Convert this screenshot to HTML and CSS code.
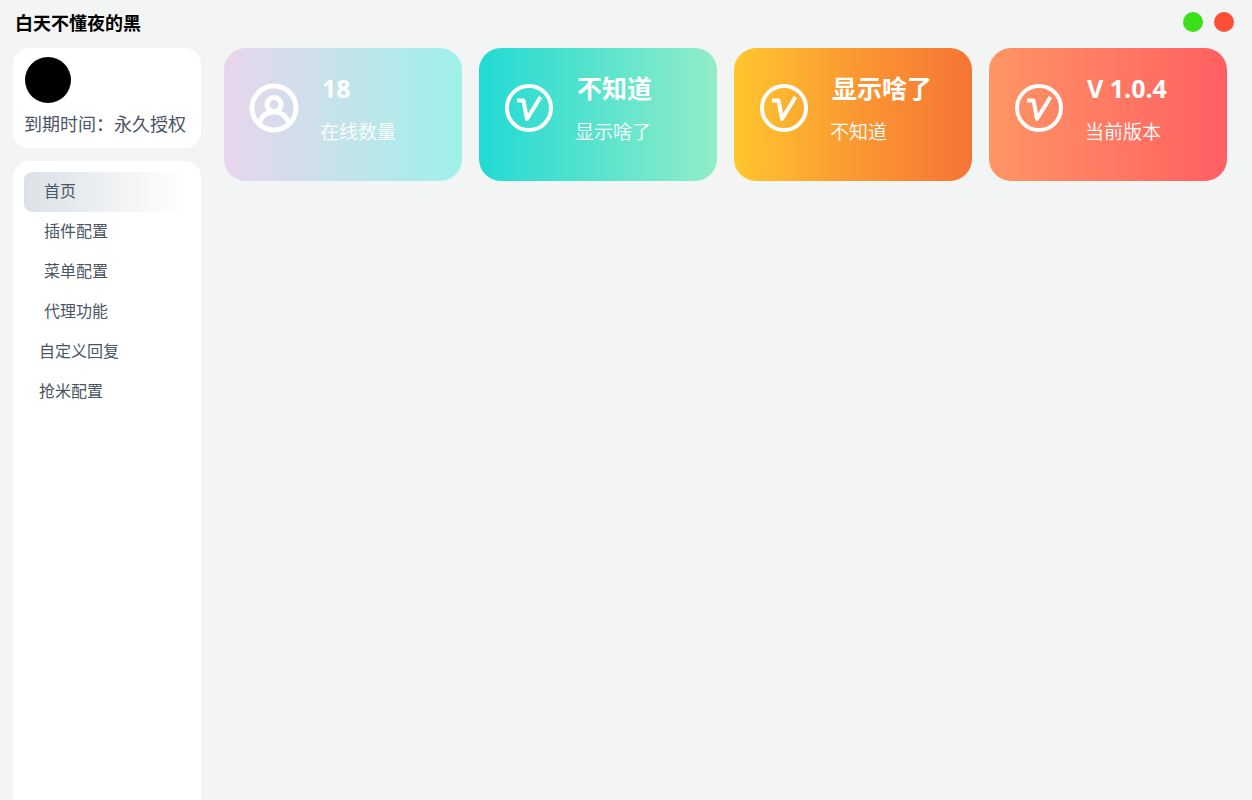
FILE: index.html
```html
<!DOCTYPE html>
<html lang="zh-CN">
<head>
    <meta charset="UTF-8">
    <meta name="viewport" content="width=device-width, initial-scale=1.0">
    <title>白天不懂夜的黑</title>
    <link rel="stylesheet" href="styles.css">
</head>
<body>
    <header class="title-bar">
        <h1 class="app-title">白天不懂夜的黑</h1>
        <div class="window-controls">
            <button type="button" class="window-btn btn-minimize" aria-label="最小化"></button>
            <button type="button" class="window-btn btn-close" aria-label="关闭"></button>
        </div>
    </header>

    <div class="layout">
        <aside class="sidebar">
            <div class="user-card">
                <div class="avatar"></div>
                <p class="expire">到期时间：永久授权</p>
            </div>
            <nav class="menu">
                <a href="#home" class="menu-item active">首页</a>
                <a href="#plugin" class="menu-item">插件配置</a>
                <a href="#menu" class="menu-item">菜单配置</a>
                <a href="#agent" class="menu-item">代理功能</a>
                <a href="#reply" class="menu-item menu-item-wide">自定义回复</a>
                <a href="#grab" class="menu-item menu-item-wide">抢米配置</a>
            </nav>
        </aside>

        <main class="content">
            <section class="card card-online">
                <svg class="card-icon icon-user" viewBox="0 0 48 48">
                    <circle cx="24" cy="24" r="22"></circle>
                    <circle cx="24" cy="20.5" r="7"></circle>
                    <path d="M10 38C12 31.5 17 28 24 28S36 31.5 38 38"></path>
                </svg>
                <div class="card-text">
                    <h2 class="card-value">18</h2>
                    <p class="card-label">在线数量</p>
                </div>
            </section>
            <section class="card card-unknown">
                <svg class="card-icon" viewBox="0 0 48 48">
                    <circle cx="24" cy="24" r="22"></circle>
                    <path d="M12 16.5H18.5L22 35L35.5 13"></path>
                </svg>
                <div class="card-text">
                    <h2 class="card-value">不知道</h2>
                    <p class="card-label">显示啥了</p>
                </div>
            </section>
            <section class="card card-display">
                <svg class="card-icon" viewBox="0 0 48 48">
                    <circle cx="24" cy="24" r="22"></circle>
                    <path d="M12 16.5H18.5L22 35L35.5 13"></path>
                </svg>
                <div class="card-text">
                    <h2 class="card-value">显示啥了</h2>
                    <p class="card-label">不知道</p>
                </div>
            </section>
            <section class="card card-version">
                <svg class="card-icon" viewBox="0 0 48 48">
                    <circle cx="24" cy="24" r="22"></circle>
                    <path d="M12 16.5H18.5L22 35L35.5 13"></path>
                </svg>
                <div class="card-text">
                    <h2 class="card-value">V 1.0.4</h2>
                    <p class="card-label">当前版本</p>
                </div>
            </section>
        </main>
    </div>
</body>
</html>
```
FILE: styles.css
```css
* {
    box-sizing: border-box;
}
body {
    margin: 0;
    min-height: 100vh;
    display: flex;
    flex-direction: column;
    font-family: "Open Sans", "Noto Sans CJK SC", sans-serif;
    background: #f3f5f4;
    color: #4b5563;
}
h1, h2, p {
    margin: 0;
}
.title-bar {
    display: flex;
    align-items: center;
    justify-content: space-between;
    height: 48px;
    padding: 0 18px 4px 15px;
}
.app-title {
    padding-top: 2px;
    font-size: 18px;
    line-height: 24px;
    font-weight: bold;
    color: #000;
}
.window-controls {
    display: flex;
    gap: 11px;
}
.window-btn {
    width: 20px;
    height: 20px;
    padding: 0;
    border: none;
    border-radius: 50%;
    cursor: pointer;
}
.btn-minimize {
    background: #3be01b;
}
.btn-close {
    background: #fb4f3a;
}
.layout {
    flex: 1;
    display: flex;
    gap: 23px;
    padding: 0 25px 0 13px;
}
.sidebar {
    width: 188px;
    flex-shrink: 0;
    display: flex;
    flex-direction: column;
    gap: 13px;
}
.user-card {
    padding: 9px 11px 12px;
    border-radius: 16px;
    background: #fff;
}
.avatar {
    width: 46px;
    height: 46px;
    margin-left: 1px;
    border-radius: 50%;
    background: #000;
}
.expire {
    margin-top: 9px;
    font-size: 18px;
    line-height: 24px;
    white-space: nowrap;
}
.menu {
    flex: 1;
    padding: 11px 14px 11px 11px;
    border-radius: 16px 16px 0 0;
    background: #fff;
}
.menu-item {
    display: block;
    height: 40px;
    padding-left: 20px;
    border-radius: 8px;
    font-size: 16px;
    line-height: 38px;
    color: #4b5563;
    text-decoration: none;
}
.menu-item-wide {
    padding-left: 15px;
}
.menu-item.active {
    background: linear-gradient(to right, #dce1e6, #fff);
}
.content {
    flex: 1;
    display: grid;
    grid-template-columns: repeat(4, 1fr);
    align-content: start;
    gap: 17px;
}
.card {
    display: flex;
    align-items: flex-start;
    gap: 22px;
    height: 133px;
    padding: 24px 26px;
    border-radius: 22px;
    color: #fff;
}
.card-icon {
    width: 48px;
    height: 48px;
    margin-top: 12px;
    flex-shrink: 0;
    fill: none;
    stroke: currentColor;
    stroke-width: 4;
    stroke-linejoin: round;
    overflow: visible;
}
.icon-user {
    stroke-width: 5;
}
.card-value {
    padding-left: 2px;
    font-size: 25px;
    line-height: 32px;
    font-weight: bold;
}
.card-label {
    margin-top: 14px;
    font-size: 19px;
    line-height: 28px;
    font-weight: 350;
}
.card-online {
    background: linear-gradient(to right, #e9d5ec, #9ef1e9);
}
.card-unknown {
    background: linear-gradient(to right, #21dad3, #92edc8);
}
.card-display {
    background: linear-gradient(to right, #ffc62e, #fb9932 50%, #f57434);
}
.card-version {
    background: linear-gradient(to right, #ff9564, #ff5f62);
}
```
